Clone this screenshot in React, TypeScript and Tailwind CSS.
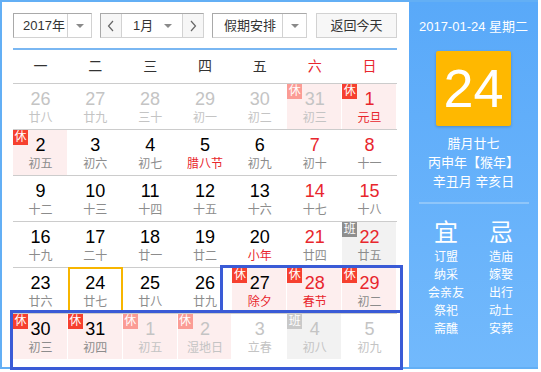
import React from "react";

type Cell = {
  d: number;
  l: string;
  other?: boolean;
  red?: boolean;
  fest?: boolean;
  badge?: "休" | "班";
  today?: boolean;
};

const rows: Cell[][] = [
  [
    { d: 26, l: "廿八", other: true },
    { d: 27, l: "廿九", other: true },
    { d: 28, l: "三十", other: true },
    { d: 29, l: "初一", other: true },
    { d: 30, l: "初二", other: true },
    { d: 31, l: "初三", other: true, badge: "休" },
    { d: 1, l: "元旦", red: true, fest: true, badge: "休" },
  ],
  [
    { d: 2, l: "初五", badge: "休" },
    { d: 3, l: "初六" },
    { d: 4, l: "初七" },
    { d: 5, l: "腊八节", fest: true },
    { d: 6, l: "初九" },
    { d: 7, l: "初十", red: true },
    { d: 8, l: "十一", red: true },
  ],
  [
    { d: 9, l: "十二" },
    { d: 10, l: "十三" },
    { d: 11, l: "十四" },
    { d: 12, l: "十五" },
    { d: 13, l: "十六" },
    { d: 14, l: "十七", red: true },
    { d: 15, l: "十八", red: true },
  ],
  [
    { d: 16, l: "十九" },
    { d: 17, l: "二十" },
    { d: 18, l: "廿一" },
    { d: 19, l: "廿二" },
    { d: 20, l: "小年", fest: true },
    { d: 21, l: "廿四", red: true },
    { d: 22, l: "廿五", red: true, badge: "班" },
  ],
  [
    { d: 23, l: "廿六" },
    { d: 24, l: "廿七", today: true },
    { d: 25, l: "廿八" },
    { d: 26, l: "廿九" },
    { d: 27, l: "除夕", fest: true, badge: "休" },
    { d: 28, l: "春节", red: true, fest: true, badge: "休" },
    { d: 29, l: "初二", red: true, badge: "休" },
  ],
  [
    { d: 30, l: "初三", badge: "休" },
    { d: 31, l: "初四", badge: "休" },
    { d: 1, l: "初五", other: true, badge: "休" },
    { d: 2, l: "湿地日", other: true, badge: "休" },
    { d: 3, l: "立春", other: true },
    { d: 4, l: "初八", other: true, badge: "班" },
    { d: 5, l: "初九", other: true },
  ],
];

const weekdays = ["一", "二", "三", "四", "五", "六", "日"];

function Caret() {
  return (
    <div className="w-0 h-0 border-l-[4px] border-r-[4px] border-t-[4px] border-l-transparent border-r-transparent border-t-[#8a8a8a]" />
  );
}

function Chevron({ dir }: { dir: "l" | "r" }) {
  return (
    <svg width="8" height="12" viewBox="0 0 8 12">
      <polyline
        points={dir === "l" ? "6,1 1.5,6 6,11" : "2,1 6.5,6 2,11"}
        fill="none"
        stroke="#666"
        strokeWidth="1.2"
      />
    </svg>
  );
}

function DayCell({ c }: { c: Cell }) {
  const bg =
    c.badge === "休" ? "bg-[#fdeeee]" : c.badge === "班" ? "bg-[#f2f2f2]" : "";
  const numColor = c.other
    ? "text-[#c4c4c4]"
    : c.red
    ? "text-[#e8262d]"
    : "text-black";
  const lunColor = c.other
    ? "text-[#c4c4c4]"
    : c.fest
    ? "text-[#e8262d]"
    : "text-[#8c8c8c]";
  const badgeBg =
    c.badge === "休"
      ? c.other
        ? "bg-[#fb9c95]"
        : "bg-[#f6402f]"
      : c.other
      ? "bg-[#c9c9c9]"
      : "bg-[#8e8e8e]";
  return (
    <div className="relative h-full">
      {bg && <div className={`absolute left-0 top-0 bottom-0 right-px ${bg}`} />}
      {c.badge && (
        <div
          className={`absolute left-0 top-0 w-[15px] h-[15px] flex items-center justify-center text-white text-[12px] leading-[15px] ${badgeBg}`}
        >
          {c.badge}
        </div>
      )}
      {c.today && (
        <div className="absolute left-0 right-0 top-[-1px] bottom-0 border-2 border-[#f7b500]" />
      )}
      <div className="relative flex flex-col items-center pt-[5px]">
        <div className={`text-[18px] leading-[20px] ${numColor}`}>{c.d}</div>
        <div className={`mt-[1px] text-[12px] leading-[16px] ${lunColor}`}>{c.l}</div>
      </div>
    </div>
  );
}

export default function App() {
  return (
    <div className="relative w-[541px] h-[372px] bg-white font-['Liberation_Sans','Noto_Sans_CJK_SC',sans-serif]">
      <div className="flex w-[538px] h-[369px] border-l-2 border-t-2 border-b-2 border-[#63aff5]">
        {/* Left calendar */}
        <div className="w-[407px] pl-[11px] pt-[11px]">
          <div className="w-[384px] flex items-center h-[25px] text-[13px] text-[#333]">
            <div className="w-[79px] h-[25px] flex border border-t-[#a9a9a9] border-l-[#a9a9a9] border-r-[#d2d2d2] border-b-[#d2d2d2]">
              <div className="flex-1 pl-[9px] leading-[23px]">2017年</div>
              <div className="w-[24px] border-l border-[#d2d2d2] flex items-center justify-center">
                <Caret />
              </div>
            </div>
            <div className="ml-[8px] w-[104px] h-[25px] flex border border-t-[#a9a9a9] border-l-[#a9a9a9] border-r-[#d2d2d2] border-b-[#d2d2d2]">
              <div className="w-[21px] bg-[#f6f6f6] border-r border-[#d2d2d2] flex items-center justify-center">
                <Chevron dir="l" />
              </div>
              <div className="w-[60px] flex items-center pl-[11px] pr-[10px]">
                <span className="flex-1 leading-[23px]">1月</span>
                <Caret />
              </div>
              <div className="flex-1 bg-[#f6f6f6] border-l border-[#d2d2d2] flex items-center justify-center">
                <Chevron dir="r" />
              </div>
            </div>
            <div className="ml-[8px] w-[95px] h-[25px] flex border border-t-[#a9a9a9] border-l-[#a9a9a9] border-r-[#d2d2d2] border-b-[#d2d2d2]">
              <div className="flex-1 pl-[11px] leading-[23px]">假期安排</div>
              <div className="w-[24px] border-l border-[#d2d2d2] flex items-center justify-center">
                <Caret />
              </div>
            </div>
            <div className="ml-[9px] w-[81px] h-[25px] border border-[#d2d2d2] bg-[#f7f7f7] flex items-center justify-center leading-[23px]">
              返回今天
            </div>
          </div>
          <div className="mt-[10px] w-[384px] h-[2px] bg-[#7ab7f2]" />
          <div className="w-[384px] grid grid-cols-7 h-[34px] border-b border-[#cccccc] text-[14px]">
            {weekdays.map((w, i) => (
              <div
                key={w}
                className={`flex items-center justify-center ${i >= 5 ? "text-[#e8262d]" : "text-[#333]"}`}
              >
                {w}
              </div>
            ))}
          </div>
          {rows.map((r, ri) => (
            <div
              key={ri}
              className={`w-[384px] grid grid-cols-7 ${ri < 5 ? "h-[46px] border-b border-[#cccccc]" : "h-[45px]"}`}
            >
              {r.map((c, ci) => (
                <DayCell key={ci} c={c} />
              ))}
            </div>
          ))}
        </div>
        {/* Right panel */}
        <div className="flex-1 flex flex-col items-center bg-linear-to-b from-[#59a9f9] to-[#72b9fc] text-white pt-[17px]">
          <div className="text-[13px] leading-[16px] whitespace-nowrap">2017-01-24 星期二</div>
          <div className="mt-[16px] w-[75px] h-[75px] rounded-[2px] bg-[#ffb800] shadow-[0_1px_3px_rgba(0,0,0,0.2)] flex items-center justify-center text-[54px] leading-[75px]">
            24
          </div>
          <div className="mt-[8px] flex flex-col items-center text-[13px] leading-[19px]">
            <div>腊月廿七</div>
            <div>丙申年【猴年】</div>
            <div>辛丑月 辛亥日</div>
          </div>
          <div className="mt-[11px] w-[110px] h-[2px] bg-[#8fc6fa]" />
          <div className="mt-[14px] w-[110px] grid grid-cols-2 text-[24px] leading-[30px] text-center">
            <div>宜</div>
            <div>忌</div>
          </div>
          <div className="w-[110px] grid grid-cols-2 text-[12px] leading-[18px] text-center">
            <div className="flex flex-col">
              <span>订盟</span>
              <span>纳采</span>
              <span>会亲友</span>
              <span>祭祀</span>
              <span>斋醮</span>
            </div>
            <div className="flex flex-col">
              <span>造庙</span>
              <span>嫁娶</span>
              <span>出行</span>
              <span>动土</span>
              <span>安葬</span>
            </div>
          </div>
        </div>
      </div>
      {/* Annotation boxes */}
      <div className="absolute left-[220px] top-[265px] w-[183px] h-[48px] border-[3px] border-[#3a5bd6]" />
      <div className="absolute left-[10px] top-[310px] w-[393px] h-[60px] border-[3px] border-[#3a5bd6]" />
    </div>
  );
}
